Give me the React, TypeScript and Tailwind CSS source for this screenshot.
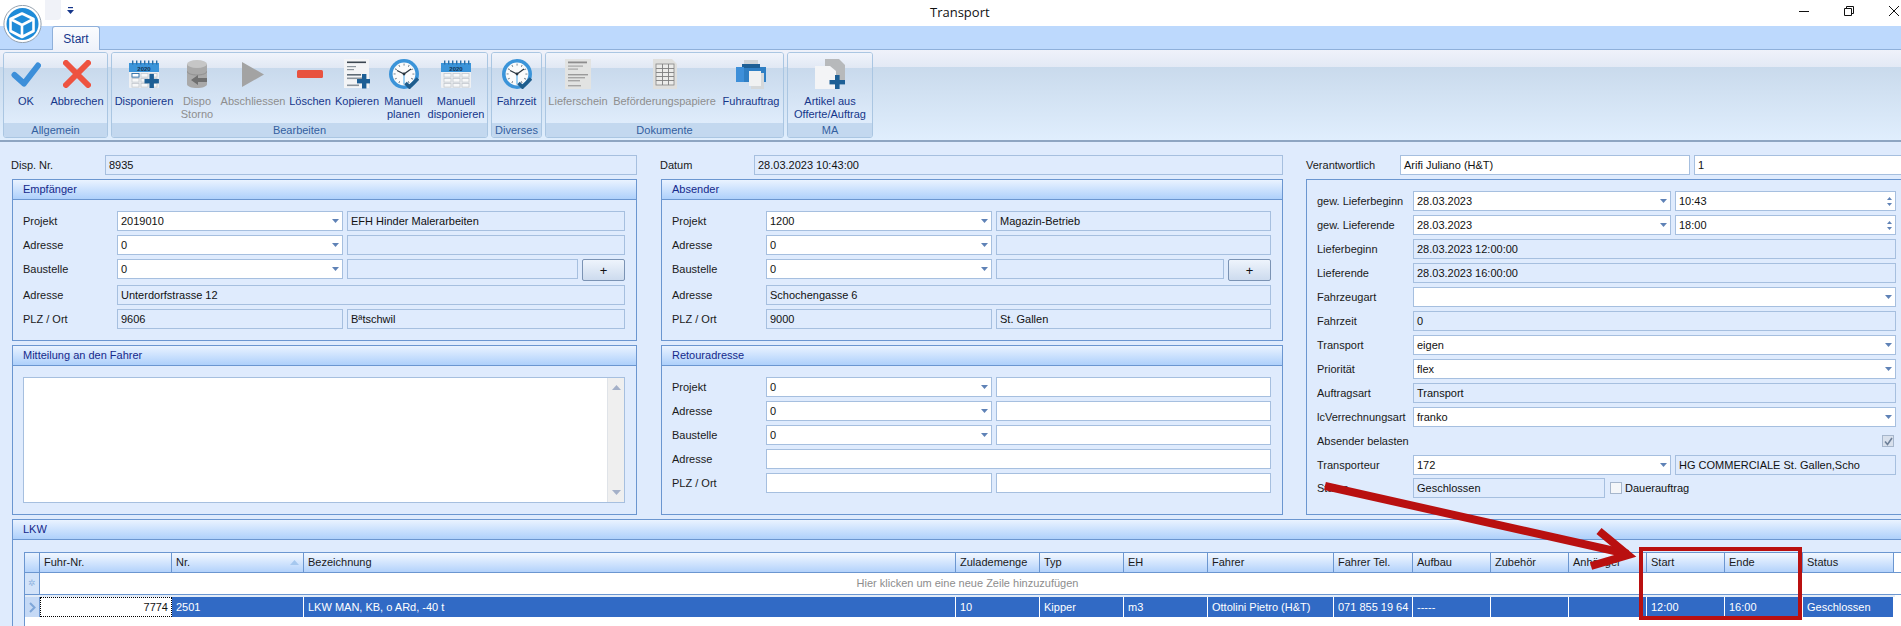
import React from "react";

const Cal = ({ plus }: { plus?: boolean }) => (
  <svg width="30" height="28" viewBox="0 0 30 28">
    <rect x="0" y="3" width="30" height="25" rx="1" fill="#eef0f3" />
    <rect x="0" y="3" width="30" height="9" fill="#3b94d9" />
    {[3, 7, 11, 15, 19, 23, 27].map((x) => (
      <rect key={x} x={x} y="0.5" width="1.4" height="4" fill="#2a6ea8" />
    ))}
    <text x="15" y="10.5" textAnchor="middle" fontSize="6" fontWeight="700" fill="#12324f" fontFamily="Liberation Sans, sans-serif">2020</text>
    {[14, 19, 24].map((y) =>
      [3, 12, 21].map((x) => (
        <rect key={`${x}-${y}`} x={x} y={y - 0.5} width="7" height="3.6" fill="#f7f8f9" stroke="#c2c8ce" strokeWidth="0.8" />
      ))
    )}
    {plus && (
      <>
        <rect x="3" y="13.5" width="7" height="3.6" fill="#fff" stroke="#2a6ea8" strokeWidth="0.9" />
        <rect x="20.5" y="14" width="4.4" height="14" fill="#1d5f95" />
        <rect x="15.5" y="19" width="14.4" height="4.4" fill="#1d5f95" />
      </>
    )}
  </svg>
);

const Clock = () => (
  <svg width="30" height="30" viewBox="0 0 30 30">
    <circle cx="15" cy="15" r="15" fill="#3b94d9" />
    <circle cx="15" cy="15" r="11.4" fill="#fbfbfb" />
    {[0, 30, 60, 90, 120, 150, 180, 210, 240, 270, 300, 330].map((a) => (
      <rect key={a} x="14.6" y="4.6" width="0.9" height="2" fill="#6d7a85" transform={`rotate(${a} 15 15)`} />
    ))}
    <path d="M15 15 L15 25" stroke="#9fd0f2" strokeWidth="2" />
    <path d="M15 15 L8 11.5" stroke="#2b3640" strokeWidth="1.3" />
    <path d="M15 15 L22 10" stroke="#2b3640" strokeWidth="1.3" />
    <circle cx="15" cy="15" r="1.4" fill="#2b3640" />
    <path d="M16.5 24 L20.5 28 L29 19.5" fill="none" stroke="#1f5d8c" strokeWidth="3.6" />
  </svg>
);

const Doc = () => (
  <svg width="26" height="30" viewBox="0 0 26 30">
    <rect x="0" y="0" width="25" height="29" fill="#f3f4f6" />
    <rect x="3" y="2.5" width="19" height="1.6" fill="#3c4650" />
    <rect x="3" y="7" width="9" height="1.2" fill="#8b949c" />
    <rect x="3" y="10" width="7" height="1.2" fill="#8b949c" />
    <rect x="3" y="15" width="14" height="1.6" fill="#5f6b76" />
    <rect x="3" y="18.5" width="16" height="1.6" fill="#8b949c" />
    <rect x="3" y="25.5" width="12" height="1.6" fill="#8b949c" />
    <rect x="18" y="15" width="4.4" height="14.5" fill="#1d5f95" />
    <rect x="13" y="20" width="14.4" height="4.4" fill="#1d5f95" />
  </svg>
);

const Ribbon = ({ w, label, dis, children }: { w: string; label: React.ReactNode; dis?: boolean; children: React.ReactNode }) => (
  <div className={`${w} flex flex-col items-center shrink-0`}>
    <div className="h-[30px] flex items-center justify-center">{children}</div>
    <div className={`mt-[6px] text-center leading-[13px] whitespace-nowrap ${dis ? "text-[#8e8e8e]" : "text-[#15368a]"}`}>{label}</div>
  </div>
);

const Group = ({ w, title, children }: { w: string; title: string; children: React.ReactNode }) => (
  <div className={`${w} h-[86px] shrink-0 flex flex-col rounded-[3px] border border-[#aac6e2] overflow-hidden`}>
    <div className="h-[70px] bg-[linear-gradient(#f0f4fb_0%,#e1e8f4_21%,#c8d9ec_21%,#dfecfb_100%)] flex justify-center pt-[6px]">{children}</div>
    <div className="h-[14px] bg-[#c3d8ef] text-center leading-[14px] text-[#33609f]">{title}</div>
  </div>
);

const Arrow = () => (
  <svg width="7" height="4" viewBox="0 0 7 4" className="shrink-0"><path d="M0 0H7L3.5 4Z" fill="#5f82b6" /></svg>
);

const Field = ({ w, v, ro, combo, spin }: { w: string; v?: string; ro?: boolean; combo?: boolean; spin?: boolean }) => (
  <div className={`${w} h-[20px] shrink-0 border border-[#a6bfdf] flex items-center justify-between pl-[3px] pr-[3px] whitespace-nowrap overflow-hidden ${ro ? "bg-[#dfebfd]" : "bg-white"}`}>
    <span>{v}</span>
    {combo && <Arrow />}
    {spin && (
      <span className="flex flex-col gap-[3px]">
        <svg width="5" height="3" viewBox="0 0 5 3"><path d="M0 3H5L2.5 0Z" fill="#5f82b6" /></svg>
        <svg width="5" height="3" viewBox="0 0 5 3"><path d="M0 0H5L2.5 3Z" fill="#5f82b6" /></svg>
      </span>
    )}
  </div>
);

const Plus = () => (
  <div className="w-[43px] h-[22px] shrink-0 rounded-[2px] border border-[#7b93b4] bg-gradient-to-b from-[#eef4fc] to-[#cddbee] flex items-center justify-center text-[13px] leading-none text-[#111]">+</div>
);

const Label = ({ w, t }: { w: string; t: string }) => (
  <div className={`${w} h-[20px] shrink-0 leading-[20px] whitespace-nowrap text-[#1a1a1a]`}>{t}</div>
);

const Panel = ({ w, h, title, children }: { w: string; h: string; title: string; children: React.ReactNode }) => (
  <div className={`${w} ${h} border border-[#6b96d0] flex flex-col`}>
    <div className="h-[20px] shrink-0 bg-gradient-to-b from-[#eaf3ff] to-[#aed0fb] border-b border-[#6b96d0] pl-[10px] leading-[19px] text-[#15298b]">{title}</div>
    {children}
  </div>
);

const cols = [
  { w: "w-[132px]", t: "Fuhr-Nr.", v: "7774" },
  { w: "w-[132px]", t: "Nr.", v: "2501" },
  { w: "w-[652px]", t: "Bezeichnung", v: "LKW MAN, KB, o ARd, -40 t" },
  { w: "w-[84px]", t: "Zulademenge", v: "10" },
  { w: "w-[84px]", t: "Typ", v: "Kipper" },
  { w: "w-[84px]", t: "EH", v: "m3" },
  { w: "w-[126px]", t: "Fahrer", v: "Ottolini Pietro (H&T)" },
  { w: "w-[79px]", t: "Fahrer Tel.", v: "071 855 19 64" },
  { w: "w-[78px]", t: "Aufbau", v: "-----" },
  { w: "w-[78px]", t: "Zubehör", v: "" },
  { w: "w-[78px]", t: "Anhänger", v: "" },
  { w: "w-[78px]", t: "Start", v: "12:00" },
  { w: "w-[78px]", t: "Ende", v: "16:00" },
  { w: "w-[91px]", t: "Status", v: "Geschlossen" },
];

export default function App() {
  return (
    <div className="relative w-[1901px] h-[626px] overflow-hidden bg-[#dfebfd] text-[11px] font-['Liberation_Sans',sans-serif] text-[#111]">
      {/* title bar */}
      <div className="h-[26px] bg-white flex items-center relative">
        <div className="absolute left-[45px] top-0 w-[16px] h-[20px] bg-[#f0f2f8] rounded-br-[4px]" />
        <div className="w-[930px] shrink-0 pl-[67px] pb-[6px]">
          <svg width="7" height="7" viewBox="0 0 7 7"><rect x="1" y="0" width="5" height="1.2" fill="#15368a" /><path d="M0 3H7L3.5 7Z" fill="#15368a" /></svg>
        </div>
        <div className="text-[13px] text-[#111] leading-none font-['Open_Sans',sans-serif] pb-[2px]">Transport</div>
        <div className="ml-auto flex items-center gap-[35px] pr-[2px] pb-[4px]">
          <svg width="10" height="10" viewBox="0 0 10 10"><path d="M0 5.5H10" stroke="#111" strokeWidth="1" /></svg>
          <svg width="10" height="10" viewBox="0 0 10 10"><path d="M2.5 2.5V0.5H9.5V7.5H7.5M0.5 2.5H7.5V9.5H0.5Z" fill="none" stroke="#111" strokeWidth="1" /></svg>
          <svg width="10" height="10" viewBox="0 0 10 10"><path d="M0 0L10 10M10 0L0 10" stroke="#111" strokeWidth="1" /></svg>
        </div>
      </div>

      {/* logo */}
      <svg className="absolute left-[3px] top-[5px] z-10" width="39" height="38" viewBox="0 0 39 38">
        <circle cx="19.5" cy="19" r="18.6" fill="#fff" stroke="#8a97a6" strokeWidth="0.9" />
        <circle cx="19.5" cy="19" r="16" fill="#1e8bd8" />
        <path d="M19 8.5L30.5 14V26L19 32L7.5 26V14ZM7.5 14L19 20L30.5 14M19 20V32" fill="none" stroke="#fff" strokeWidth="2.6" strokeLinejoin="round" />
      </svg>

      {/* tab strip */}
      <div className="h-[24px] bg-[#bdd9fd] border-b border-[#8fb0da] flex items-end pl-[52px]">
        <div className="w-[48px] h-[24px] -mb-px bg-gradient-to-b from-[#fbfcfe] to-[#eef2fa] border border-b-0 border-[#8fb0da] rounded-t-[3px] flex items-center justify-center text-[#15368a] text-[12px]">Start</div>
      </div>

      {/* ribbon */}
      <div className="h-[92px] bg-[linear-gradient(#eff2fa_0%,#e3e9f5_19%,#c9daec_19%,#e0eefd_100%)] border-b-2 border-[#8ea5c2] flex gap-[3px] pt-[2px] pl-[3px]">
        <Group w="w-[105px]" title="Allgemein">
          <Ribbon w="w-[43px]" label="OK">
            <svg width="30" height="26" viewBox="0 0 30 26"><path d="M3.5 14L13 22.5L27 4.5" fill="none" stroke="#3d8fd9" strokeWidth="6" strokeLinecap="round" strokeLinejoin="round" /></svg>
          </Ribbon>
          <Ribbon w="w-[59px]" label="Abbrechen">
            <svg width="28" height="28" viewBox="0 0 28 28"><path d="M3 3L25 25M25 3L3 25" stroke="#ee5340" strokeWidth="6" strokeLinecap="round" /></svg>
          </Ribbon>
        </Group>
        <Group w="w-[377px]" title="Bearbeiten">
          <Ribbon w="w-[60px]" label="Disponieren"><Cal plus /></Ribbon>
          <Ribbon w="w-[46px]" dis label={<>Dispo<br />Storno</>}>
            <svg width="20" height="28" viewBox="0 0 20 28">
              <path d="M0 4V24C0 26.5 4.5 28 10 28S20 26.5 20 24V4Z" fill="#a9a9a9" />
              <ellipse cx="10" cy="4" rx="10" ry="4" fill="#c6c6c6" />
              <path d="M0 11C0 13.5 4.5 15 10 15S20 13.5 20 11" fill="none" stroke="#8b8b8b" strokeWidth="0.8" />
              <path d="M4 20L11 15V18H20V22H11V25Z" fill="#707070" />
            </svg>
          </Ribbon>
          <Ribbon w="w-[66px]" dis label="Abschliessen">
            <svg width="22" height="25" viewBox="0 0 22 25"><path d="M0 0L22 12.5L0 25Z" fill="#a3a3a3" /></svg>
          </Ribbon>
          <Ribbon w="w-[48px]" label="Löschen">
            <svg width="26" height="8" viewBox="0 0 26 8"><rect width="26" height="8" rx="1.5" fill="#e8523f" /></svg>
          </Ribbon>
          <Ribbon w="w-[46px]" label="Kopieren"><Doc /></Ribbon>
          <Ribbon w="w-[47px]" label={<>Manuell<br />planen</>}><Clock /></Ribbon>
          <Ribbon w="w-[58px]" label={<>Manuell<br />disponieren</>}><Cal /></Ribbon>
        </Group>
        <Group w="w-[51px]" title="Diverses">
          <Ribbon w="w-[49px]" label="Fahrzeit"><Clock /></Ribbon>
        </Group>
        <Group w="w-[239px]" title="Dokumente">
          <Ribbon w="w-[58px]" dis label="Lieferschein">
            <svg width="26" height="30" viewBox="0 0 26 30">
              <rect width="26" height="30" fill="#e2e3e2" />
              <rect x="3" y="2.5" width="19" height="1.8" fill="#8d8d8d" />
              <rect x="3" y="6.5" width="15" height="1.2" fill="#a5a5a5" />
              <rect x="3" y="9.5" width="10" height="1.2" fill="#a5a5a5" />
              <rect x="3" y="15" width="20" height="1.4" fill="#9a9a9a" />
              <rect x="3" y="18" width="17" height="1.4" fill="#a5a5a5" />
              <rect x="3" y="21" width="12" height="1.4" fill="#a5a5a5" />
              <rect x="3" y="26" width="13" height="1.4" fill="#a5a5a5" />
            </svg>
          </Ribbon>
          <Ribbon w="w-[115px]" dis label="Beförderungspapiere">
            <svg width="24" height="30" viewBox="0 0 24 30">
              <path d="M0 0H19L24 5V30H0Z" fill="#dfdfdd" />
              <rect x="3" y="5" width="18" height="21" fill="#fff" fillOpacity="0.4" stroke="#868686" strokeWidth="0.8" />
              {[9, 13, 17, 21].map((y) => <rect key={y} x="3" y={y} width="18" height="0.9" fill="#7e7e7e" />)}
              {[9, 15].map((x) => <rect key={x} x={x} y="5" width="0.9" height="21" fill="#7e7e7e" />)}
            </svg>
          </Ribbon>
          <Ribbon w="w-[58px]" label="Fuhrauftrag">
            <svg width="30" height="30" viewBox="0 0 30 30">
              <rect x="8" y="1" width="14" height="9" fill="#cfd4d8" />
              <rect x="0" y="8" width="30" height="15" fill="#2f7fc4" />
              <rect x="6" y="5" width="18" height="4" fill="#1d5f95" />
              <rect x="0" y="8" width="8" height="15" fill="#3d8fd9" />
              <rect x="15" y="14" width="13" height="16" fill="#d5d8da" />
              <rect x="13" y="12" width="12" height="15" fill="#f0f1f2" />
            </svg>
          </Ribbon>
        </Group>
        <Group w="w-[86px]" title="MA">
          <Ribbon w="w-[84px]" label={<>Artikel aus<br />Offerte/Auftrag</>}>
            <svg width="30" height="30" viewBox="0 0 30 30">
              <path d="M10 0H24L30 6V25H10Z" fill="#b7b9bb" />
              <path d="M0 7H15L21 12V30H0Z" fill="#f3f4f6" />
              <rect x="20" y="16" width="4.6" height="14" fill="#1d5f95" />
              <rect x="14.5" y="21" width="15.5" height="4.4" fill="#1d5f95" />
            </svg>
          </Ribbon>
        </Group>
      </div>

      {/* form */}
      <div className="flex pt-[13px] pl-[12px] gap-[24px] h-[377px]">
        {/* left */}
        <div className="w-[625px] shrink-0 flex flex-col gap-[4px]">
          <div className="flex -ml-px">
            <Label w="w-[94px]" t="Disp. Nr." />
            <Field w="w-[532px]" v="8935" ro />
          </div>
          <Panel w="w-[625px]" h="h-[162px]" title="Empfänger">
            <div className="flex flex-col gap-[4px] pt-[11px] pl-[10px]">
              <div className="flex"><Label w="w-[94px]" t="Projekt" /><Field w="w-[226px]" v="2019010" combo /><div className="w-[4px]" /><Field w="w-[278px]" v="EFH Hinder Malerarbeiten" ro /></div>
              <div className="flex"><Label w="w-[94px]" t="Adresse" /><Field w="w-[226px]" v="0" combo /><div className="w-[4px]" /><Field w="w-[278px]" ro /></div>
              <div className="flex"><Label w="w-[94px]" t="Baustelle" /><Field w="w-[226px]" v="0" combo /><div className="w-[4px]" /><Field w="w-[231px]" ro /><div className="w-[4px]" /><Plus /></div>
              <div className="flex"><Label w="w-[94px]" t="Adresse" /><Field w="w-[508px]" v="Unterdorfstrasse 12" ro /></div>
              <div className="flex"><Label w="w-[94px]" t="PLZ / Ort" /><Field w="w-[226px]" v="9606" ro /><div className="w-[4px]" /><Field w="w-[278px]" v="Bªtschwil" ro /></div>
            </div>
          </Panel>
          <Panel w="w-[625px]" h="h-[170px]" title="Mitteilung an den Fahrer">
            <div className="pt-[11px] pl-[10px]">
              <div className="w-[602px] h-[126px] bg-white border border-[#a6bfdf] flex justify-end">
                <div className="w-[17px] h-full bg-[#efefef] border-l border-[#dfe3e8] flex flex-col items-center justify-between py-[7px]">
                  <svg width="9" height="5" viewBox="0 0 9 5"><path d="M0 5H9L4.5 0Z" fill="#a4b0c8" /></svg>
                  <svg width="9" height="5" viewBox="0 0 9 5"><path d="M0 0H9L4.5 5Z" fill="#a4b0c8" /></svg>
                </div>
              </div>
            </div>
          </Panel>
        </div>

        {/* middle */}
        <div className="w-[622px] shrink-0 flex flex-col gap-[4px]">
          <div className="flex -ml-px">
            <Label w="w-[94px]" t="Datum" />
            <Field w="w-[529px]" v="28.03.2023 10:43:00" ro />
          </div>
          <Panel w="w-[622px]" h="h-[162px]" title="Absender">
            <div className="flex flex-col gap-[4px] pt-[11px] pl-[10px]">
              <div className="flex"><Label w="w-[94px]" t="Projekt" /><Field w="w-[226px]" v="1200" combo /><div className="w-[4px]" /><Field w="w-[275px]" v="Magazin-Betrieb" ro /></div>
              <div className="flex"><Label w="w-[94px]" t="Adresse" /><Field w="w-[226px]" v="0" combo /><div className="w-[4px]" /><Field w="w-[275px]" ro /></div>
              <div className="flex"><Label w="w-[94px]" t="Baustelle" /><Field w="w-[226px]" v="0" combo /><div className="w-[4px]" /><Field w="w-[228px]" ro /><div className="w-[4px]" /><Plus /></div>
              <div className="flex"><Label w="w-[94px]" t="Adresse" /><Field w="w-[505px]" v="Schochengasse 6" ro /></div>
              <div className="flex"><Label w="w-[94px]" t="PLZ / Ort" /><Field w="w-[226px]" v="9000" ro /><div className="w-[4px]" /><Field w="w-[275px]" v="St. Gallen" ro /></div>
            </div>
          </Panel>
          <Panel w="w-[622px]" h="h-[170px]" title="Retouradresse">
            <div className="flex flex-col gap-[4px] pt-[11px] pl-[10px]">
              <div className="flex"><Label w="w-[94px]" t="Projekt" /><Field w="w-[226px]" v="0" combo /><div className="w-[4px]" /><Field w="w-[275px]" /></div>
              <div className="flex"><Label w="w-[94px]" t="Adresse" /><Field w="w-[226px]" v="0" combo /><div className="w-[4px]" /><Field w="w-[275px]" /></div>
              <div className="flex"><Label w="w-[94px]" t="Baustelle" /><Field w="w-[226px]" v="0" combo /><div className="w-[4px]" /><Field w="w-[275px]" /></div>
              <div className="flex"><Label w="w-[94px]" t="Adresse" /><Field w="w-[505px]" /></div>
              <div className="flex"><Label w="w-[94px]" t="PLZ / Ort" /><Field w="w-[226px]" /><div className="w-[4px]" /><Field w="w-[275px]" /></div>
            </div>
          </Panel>
        </div>

        {/* right */}
        <div className="w-[600px] shrink-0 -ml-px flex flex-col gap-[4px]">
          <div className="flex">
            <Label w="w-[94px]" t="Verantwortlich" />
            <Field w="w-[290px]" v="Arifi Juliano (H&T)" />
            <div className="w-[4px]" />
            <Field w="w-[212px]" v="1" />
          </div>
          <div className="w-[600px] h-[336px] border border-r-0 border-[#6b96d0] pt-[11px] pl-[10px] flex flex-col gap-[4px]">
            <div className="flex"><Label w="w-[96px]" t="gew. Lieferbeginn" /><Field w="w-[258px]" v="28.03.2023" combo /><div className="w-[4px]" /><Field w="w-[221px]" v="10:43" spin /></div>
            <div className="flex"><Label w="w-[96px]" t="gew. Lieferende" /><Field w="w-[258px]" v="28.03.2023" combo /><div className="w-[4px]" /><Field w="w-[221px]" v="18:00" spin /></div>
            <div className="flex"><Label w="w-[96px]" t="Lieferbeginn" /><Field w="w-[483px]" v="28.03.2023 12:00:00" ro /></div>
            <div className="flex"><Label w="w-[96px]" t="Lieferende" /><Field w="w-[483px]" v="28.03.2023 16:00:00" ro /></div>
            <div className="flex"><Label w="w-[96px]" t="Fahrzeugart" /><Field w="w-[483px]" combo /></div>
            <div className="flex"><Label w="w-[96px]" t="Fahrzeit" /><Field w="w-[483px]" v="0" ro /></div>
            <div className="flex"><Label w="w-[96px]" t="Transport" /><Field w="w-[483px]" v="eigen" combo /></div>
            <div className="flex"><Label w="w-[96px]" t="Priorität" /><Field w="w-[483px]" v="flex" combo /></div>
            <div className="flex"><Label w="w-[96px]" t="Auftragsart" /><Field w="w-[483px]" v="Transport" ro /></div>
            <div className="flex"><Label w="w-[96px]" t="lcVerrechnungsart" /><Field w="w-[483px]" v="franko" combo /></div>
            <div className="flex w-[577px] items-center justify-between h-[20px]">
              <Label w="w-[150px]" t="Absender belasten" />
              <div className="w-[12px] h-[12px] border border-[#a6b6cc] bg-[#d8e0ec] flex items-center justify-center">
                <svg width="9" height="9" viewBox="0 0 9 9"><path d="M1 4.5L3.5 7.5L8 1" fill="none" stroke="#6d7f98" strokeWidth="1.6" /></svg>
              </div>
            </div>
            <div className="flex"><Label w="w-[96px]" t="Transporteur" /><Field w="w-[258px]" v="172" combo /><div className="w-[4px]" /><Field w="w-[221px]" v="HG COMMERCIALE St. Gallen,Scho" ro /></div>
            <div className="flex items-center -mt-[1px]">
              <Label w="w-[96px]" t="Status" />
              <Field w="w-[192px]" v="Geschlossen" ro />
              <div className="w-[12px] h-[12px] ml-[5px] border border-[#a6b6cc] bg-[#f4f6f9]" />
              <div className="ml-[3px]">Dauerauftrag</div>
            </div>
          </div>
        </div>
      </div>

      {/* LKW */}
      <div className="ml-[12px] mt-[0px] w-[1889px] h-[120px] border-t border-l border-[#6b96d0] flex flex-col">
        <div className="h-[20px] shrink-0 bg-gradient-to-b from-[#eaf3ff] to-[#aed0fb] border-b border-[#6b96d0] pl-[10px] leading-[19px] text-[#15298b]">LKW</div>
        <div className="pt-[12px] pl-[11px]">
          <div className="w-[1890px] h-[100px] border-t border-l border-[#6b96d0] bg-white">
            <div className="flex h-[20px] border-b border-[#6b96d0]">
              <div className="w-[15px] shrink-0 bg-gradient-to-b from-[#eaf3ff] to-[#b3d2fb] border-r border-[#6b96d0]" />
              {cols.map((c) => (
                <div key={c.t} className={`${c.w} shrink-0 bg-gradient-to-b from-[#f3f8ff] to-[#b3d2fb] border-r border-[#6b96d0] pl-[4px] leading-[19px] text-[#1a1a1a] flex justify-between items-center pr-[4px]`}>
                  <span>{c.t}</span>
                  {c.t === "Nr." && <svg width="9" height="5" viewBox="0 0 9 5"><path d="M0 5H9L4.5 0Z" fill="#a6c8ef" /></svg>}
                </div>
              ))}
            </div>
            <div className="flex h-[22px] border-b border-[#6b96d0]">
              <div className="w-[15px] shrink-0 bg-[#d3e3f9] border-r border-[#6b96d0] flex items-center justify-center text-[#8fb3e0] text-[9px] leading-none">✲</div>
              <div className="w-[1855px] shrink-0 text-center leading-[21px] text-[#8d8d8d]">Hier klicken um eine neue Zeile hinzuzufügen</div>
            </div>
            <div className="flex h-[2px]"><div className="w-[1870px] bg-[#e3ecf8]" /></div>
            <div className="flex h-[20px]">
              <div className="w-[15px] shrink-0 bg-[#c5d9f5] border-r border-[#6b96d0] flex items-center justify-center">
                <svg width="7" height="11" viewBox="0 0 7 11"><path d="M1 1L5.5 5.5L1 10" fill="none" stroke="#7ea6d8" strokeWidth="2" /></svg>
              </div>
              {cols.map((c, i) =>
                i === 0 ? (
                  <div key={c.t} className={`${c.w} shrink-0 bg-white border border-dotted border-black text-right pr-[3px] leading-[18px] text-[#111]`}>{c.v}</div>
                ) : (
                  <div key={c.t} className={`${c.w} shrink-0 bg-[#316ac5] border-r border-white text-white pl-[4px] leading-[20px] whitespace-nowrap overflow-hidden`}>{c.v}</div>
                )
              )}
            </div>
          </div>
        </div>
      </div>

      {/* annotation */}
      <svg className="absolute left-0 top-0 z-20 pointer-events-none" width="1901" height="626" viewBox="0 0 1901 626">
        <path d="M1325 486L1628 554" stroke="#b91010" strokeWidth="8" fill="none" />
        <path d="M1599 531L1628 555L1591 566" stroke="#b91010" strokeWidth="8" fill="none" strokeMiterlimit="10" />
      </svg>
      <div className="absolute left-[1639px] top-[547px] w-[163px] h-[73px] border-4 border-[#b91010] z-20" />
    </div>
  );
}
